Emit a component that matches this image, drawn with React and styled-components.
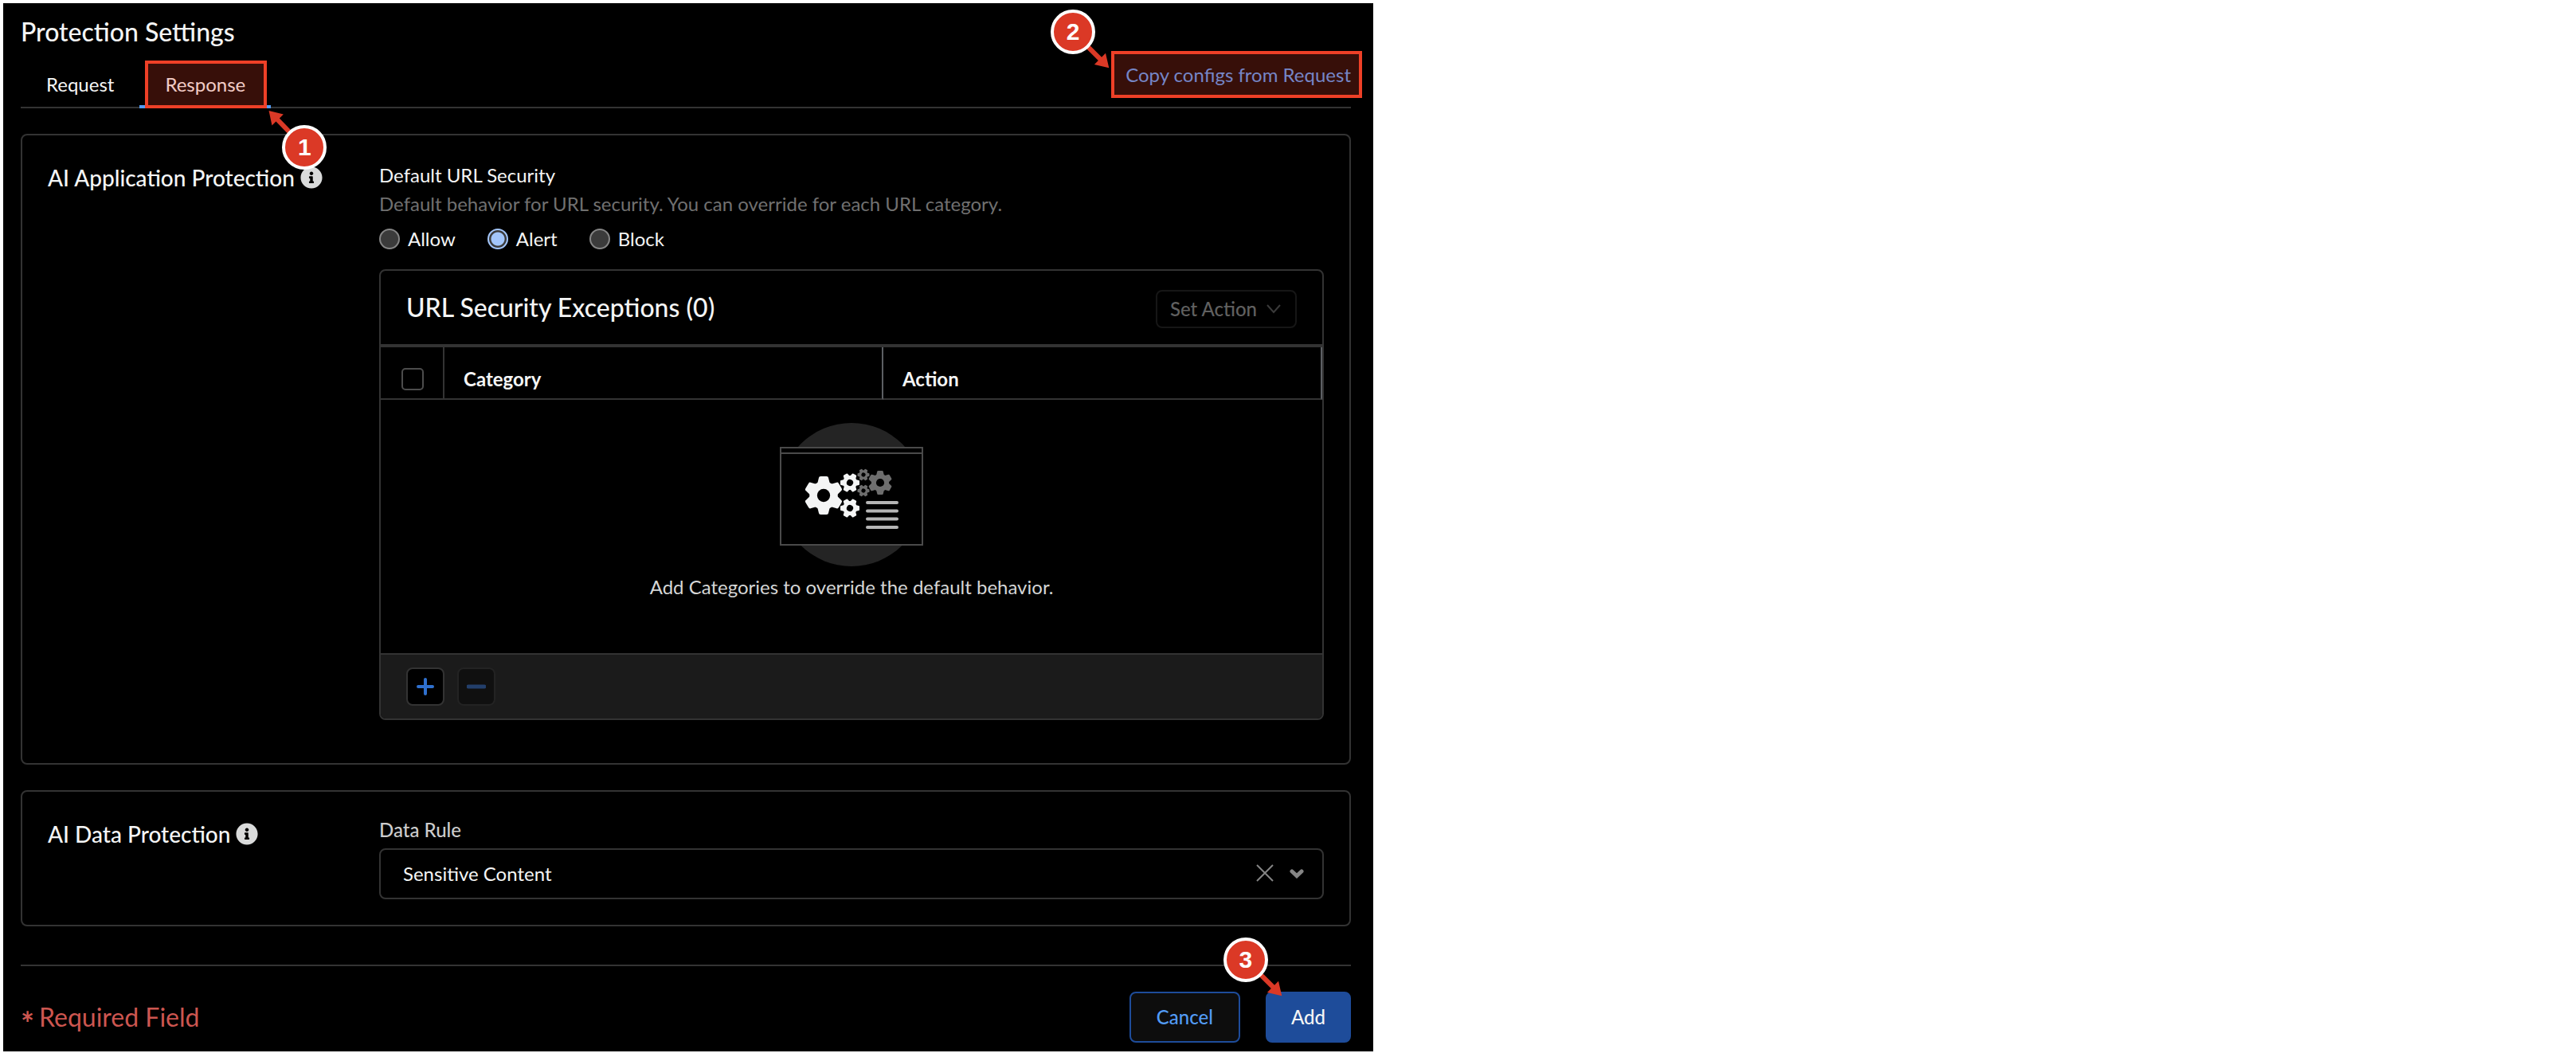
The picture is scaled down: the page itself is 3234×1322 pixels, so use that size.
import React, { useState } from "react";
import styled, { createGlobalStyle, css } from "styled-components";
import { FaInfoCircle } from "react-icons/fa";

const GlobalStyle = createGlobalStyle`
  *, *::before, *::after { box-sizing: border-box; }
  body {
    margin: 0;
    background: #fff;
    color: #f4f5f5;
    font-family: Lato, "Open Sans", sans-serif;
    font-size: 24px;
    line-height: 36px;
  }
  button, input, select { font: inherit; color: inherit; margin: 0; }
`;

const line = "#333";
const red = "#ee4027";

const Page = styled.main`
  padding: 4px;
`;

const Panel = styled.form`
  max-width: 1720px;
  background: #000;
  padding: 16px 28px 11px 22px;
`;

const Title = styled.h1`
  margin: 0 0 16px;
  font-size: 32px;
  line-height: 40px;
  font-weight: 500;
`;

const TabBar = styled.div`
  display: flex;
  align-items: flex-start;
  justify-content: space-between;
  border-bottom: 2px solid ${line};
`;

const Tabs = styled.div`
  display: flex;
  margin-bottom: -2px;
`;

const Tab = styled.button`
  position: relative;
  border: 0;
  padding: 12px 32px;
  background: none;
  cursor: pointer;
  box-shadow: ${(p) => (p.$active ? "inset 0 -4px 0 #529bf5" : "none")};
`;

const CopyLink = styled.a`
  position: relative;
  color: #529bf5;
  text-decoration: none;
`;

const Highlight = styled.span`
  position: absolute;
  inset: ${(p) => p.$inset};
  border: 4px solid ${red};
  background: rgba(238, 64, 39, 0.23);
  pointer-events: none;
`;

const Marker = styled.span`
  position: absolute;
  left: ${(p) => p.$left};
  top: ${(p) => p.$top};
  z-index: 2;
  width: 56px;
  height: 56px;
  pointer-events: none;
`;

const MarkerArrow = styled.svg`
  position: absolute;
  left: 50%;
  top: 50%;
  overflow: visible;
  transform: rotate(${(p) => p.$angle}deg);
  transform-origin: 0 0;
`;

const MarkerDisc = styled.span`
  position: absolute;
  inset: 0;
  display: flex;
  align-items: center;
  justify-content: center;
  border: 4px solid #fff;
  border-radius: 50%;
  background: #db3926;
  color: #fff;
  font: bold 30px/36px "Liberation Sans", Arial, sans-serif;
`;

const Card = styled.section`
  display: grid;
  grid-template-columns: 416px minmax(0, 1fr);
  margin-top: 32px;
  padding: 32px;
  border: 2px solid ${line};
  border-radius: 8px;
`;

const CardTitle = styled.h2`
  display: flex;
  align-items: center;
  gap: 7px;
  margin: 0;
  align-self: start;
  font-size: 28px;
  line-height: 42px;
  font-weight: 500;
  svg { color: #dadbdb; }
`;

const Field = styled.fieldset`
  margin: 0;
  padding: 0;
  border: 0;
  min-width: 0;
`;

const Legend = styled.legend`
  padding: 0;
`;

const Hint = styled.p`
  margin: 0;
  color: #707070;
`;

const Radios = styled.div`
  display: flex;
  gap: 40px;
  margin: 8px 0 20px;
`;

const RadioLabel = styled.label`
  display: flex;
  align-items: center;
  gap: 10px;
`;

const Radio = styled.input`
  appearance: none;
  width: 26px;
  height: 26px;
  border: 2px solid #858585;
  border-radius: 50%;
  background: #3b3b3b;
  &:checked {
    border-color: #a3c6fb;
    background: radial-gradient(circle, #a3c6fb 0 8px, #3b3b3b 9px);
  }
`;

const TableBox = styled.div`
  margin-bottom: 22px;
  border: 2px solid ${line};
  border-radius: 8px;
  overflow: hidden;
`;

const TableHead = styled.div`
  display: flex;
  justify-content: space-between;
  padding: 24px 32px 20px;
  border-bottom: 4px solid ${line};
`;

const TableTitle = styled.h3`
  margin: 0;
  font-size: 32px;
  line-height: 44px;
  font-weight: 500;
`;

const SetAction = styled.button`
  display: flex;
  align-items: center;
  gap: 12px;
  height: 48px;
  padding: 0 18px 0 16px;
  border: 2px solid #161616;
  border-radius: 8px;
  background: none;
  color: #606060;
  font-weight: 500;
`;

const Table = styled.table`
  width: 100%;
  table-layout: fixed;
  border-collapse: separate;
  border-spacing: 0;
`;

const Th = styled.th`
  height: 66px;
  padding: 16px 24px 0;
  border-bottom: 2px solid ${line};
  border-right: 2px solid ${(p) => (p.$narrow ? line : "#5c5f63")};
  text-align: left;
  font-weight: 700;
  ${(p) => p.$narrow && css`
    width: 80px;
    padding: 16px 24px 0 26px;
  `}
`;

const Check = styled.input`
  appearance: none;
  display: block;
  width: 28px;
  height: 28px;
  border: 2px solid #4c4c4c;
  border-radius: 5px;
  background: #000;
`;

const Empty = styled.td`
  padding: 29px 0 65px;
  text-align: center;
  color: #d5d6d6;
  svg { display: block; margin: 0 auto 8px; }
`;

const TableFoot = styled.div`
  display: flex;
  gap: 16px;
  padding: 16px 32px;
  border-top: 2px solid ${line};
  background: #1b1b1b;
`;

const SquareButton = styled.button`
  display: grid;
  place-items: center;
  width: 48px;
  height: 48px;
  padding: 0;
  border: 2px solid ${line};
  border-radius: 8px;
  background: #000;
  color: #2f70ce;
  &:disabled {
    border-color: #232323;
    background: #101010;
    color: #233f6b;
  }
`;

const FieldLabel = styled.label`
  display: block;
  margin-bottom: 7px;
  line-height: 32px;
  font-weight: 500;
  color: #ccc;
`;

const SelectBox = styled.div`
  position: relative;
  display: flex;
  align-items: center;
  height: 64px;
  border: 2px solid ${line};
  border-radius: 8px;
`;

const Select = styled.select`
  appearance: none;
  width: 100%;
  height: 100%;
  padding: 0 104px 0 28px;
  border: 0;
  background: none;
  outline: 0;
`;

const SelectIcons = styled.div`
  position: absolute;
  right: 23px;
  display: flex;
  align-items: center;
  gap: 20px;
  pointer-events: none;
`;

const ClearButton = styled.button`
  display: flex;
  padding: 0 0 2px;
  border: 0;
  background: none;
  pointer-events: auto;
`;

const Footer = styled.footer`
  display: flex;
  align-items: center;
  gap: 32px;
  margin-top: 48px;
  padding-top: 32px;
  border-top: 2px solid ${line};
`;

const Required = styled.span`
  display: flex;
  align-items: center;
  gap: 6px;
  margin-right: auto;
  color: #cd5650;
  font-size: 32px;
  line-height: 40px;
`;

const Asterisk = styled.span`
  padding-top: 16px;
  font-size: 40px;
  line-height: 40px;
  font-weight: 700;
`;

const Button = styled.button`
  position: relative;
  height: 64px;
  padding: 0 ${(p) => (p.$primary ? "30px" : "32px")};
  border: 2px solid #1e4c9a;
  border-radius: 8px;
  background: ${(p) => (p.$primary ? "#1e4c9a" : "#0d0d0d")};
  color: ${(p) => (p.$primary ? "#f4f5f5" : "#529bf5")};
  font-weight: 500;
`;

function Callout({ number, left, top, angle }) {
  return (
    <Marker $left={left} $top={top}>
      <MarkerArrow $angle={angle} width="1" height="1" fill="#db3926">
        <path d="M20 -3H48V-10L64 0L48 10V3H20Z" />
      </MarkerArrow>
      <MarkerDisc>{number}</MarkerDisc>
    </Marker>
  );
}

function Gear({ x, y, r, turn = 0, fill }) {
  const w = r * 0.25;
  const root = r * 0.33;
  const tooth = `M${-root} ${-r * 0.6}L${-w} ${-r * 0.93}Q${-w} ${-r} ${-w * 0.6} ${-r}H${w * 0.6}Q${w} ${-r} ${w} ${-r * 0.93}L${root} ${-r * 0.6}Z`;
  return (
    <g transform={`translate(${x} ${y}) rotate(${turn})`} fill={fill}>
      {[0, 60, 120, 180, 240, 300].map((a) => (
        <path key={a} d={tooth} transform={`rotate(${a})`} />
      ))}
      <circle r={r * 0.74} />
      <circle r={r * 0.34} fill="#000" />
    </g>
  );
}

function EmptyArt() {
  return (
    <svg width="180" height="180" viewBox="0 0 180 180" aria-hidden="true">
      <circle cx="90" cy="90" r="90" fill="#242424" />
      <rect x="1" y="31" width="178" height="122" fill="#000" stroke="#4a4a4a" strokeWidth="2" />
      <path d="M1 38H179" stroke="#4a4a4a" strokeWidth="2" />
      <Gear x={55} y={91} r={24} fill="#f4f5f5" />
      <Gear x={88} y={75} r={12} turn={30} fill="#f4f5f5" />
      <Gear x={88} y={107} r={12} turn={30} fill="#f4f5f5" />
      <Gear x={105} y={65} r={7.5} turn={30} fill="#6e6e6e" />
      <Gear x={105} y={85} r={7.5} turn={30} fill="#6e6e6e" />
      <Gear x={126} y={75} r={15} fill="#6e6e6e" />
      <path
        d="M110 100H147M110 110.5H147M110 120.5H147M110 131H147"
        stroke="#b5b5b5"
        strokeWidth="4"
        strokeLinecap="round"
      />
    </svg>
  );
}

export default function App() {
  const [action, setAction] = useState("Alert");
  return (
    <>
      <GlobalStyle />
      <Page>
        <Panel onSubmit={(e) => e.preventDefault()}>
          <Title>Protection Settings</Title>
          <TabBar>
            <Tabs role="tablist">
              <Tab type="button" role="tab" aria-selected="false">Request</Tab>
              <Tab type="button" role="tab" aria-selected="true" $active>
                Response
                <Highlight $inset="0 5px 0 7px" />
                <Callout number={1} left="179px" top="81px" angle={-134} />
              </Tab>
            </Tabs>
            <CopyLink href="#copy">
              Copy configs from Request
              <Highlight $inset="-12px -14px -11px -18px" />
              <Callout number={2} left="-94px" top="-64px" angle={45} />
            </CopyLink>
          </TabBar>

          <Card>
            <CardTitle>
              AI Application Protection
              <FaInfoCircle size={28} aria-hidden="true" />
            </CardTitle>
            <Field>
              <Legend>Default URL Security</Legend>
              <Hint>Default behavior for URL security. You can override for each URL category.</Hint>
              <Radios>
                {["Allow", "Alert", "Block"].map((name) => (
                  <RadioLabel key={name}>
                    <Radio
                      type="radio"
                      name="url-security"
                      checked={action === name}
                      onChange={() => setAction(name)}
                    />
                    {name}
                  </RadioLabel>
                ))}
              </Radios>
              <TableBox>
                <TableHead>
                  <TableTitle>URL Security Exceptions (0)</TableTitle>
                  <SetAction type="button" disabled>
                    Set Action
                    <svg width="18" height="12" viewBox="0 0 18 12" aria-hidden="true">
                      <path d="M1 1L9 10L17 1" fill="none" stroke="#3a3a3a" strokeWidth="2" />
                    </svg>
                  </SetAction>
                </TableHead>
                <Table>
                  <thead>
                    <tr>
                      <Th $narrow><Check type="checkbox" aria-label="Select all" /></Th>
                      <Th>Category</Th>
                      <Th>Action</Th>
                    </tr>
                  </thead>
                  <tbody>
                    <tr>
                      <Empty colSpan={3}>
                        <EmptyArt />
                        Add Categories to override the default behavior.
                      </Empty>
                    </tr>
                  </tbody>
                </Table>
                <TableFoot>
                  <SquareButton type="button" aria-label="Add category">
                    <svg width="22" height="22" viewBox="0 0 22 22" aria-hidden="true">
                      <path d="M2 11H20M11 2V20" stroke="currentColor" strokeWidth="4" strokeLinecap="round" />
                    </svg>
                  </SquareButton>
                  <SquareButton type="button" aria-label="Remove category" disabled>
                    <svg width="24" height="22" viewBox="0 0 24 22" aria-hidden="true">
                      <path d="M2 11H22" stroke="currentColor" strokeWidth="5" strokeLinecap="round" />
                    </svg>
                  </SquareButton>
                </TableFoot>
              </TableBox>
            </Field>
          </Card>

          <Card>
            <CardTitle>
              AI Data Protection
              <FaInfoCircle size={28} aria-hidden="true" />
            </CardTitle>
            <div>
              <FieldLabel htmlFor="data-rule">Data Rule</FieldLabel>
              <SelectBox>
                <Select id="data-rule" defaultValue="Sensitive Content">
                  <option>Sensitive Content</option>
                </Select>
                <SelectIcons>
                  <ClearButton type="button" aria-label="Clear">
                    <svg width="22" height="22" viewBox="0 0 22 22" aria-hidden="true">
                      <path d="M1 1L21 21M21 1L1 21" stroke="#858585" strokeWidth="2" />
                    </svg>
                  </ClearButton>
                  <svg width="18" height="12" viewBox="0 0 18 12" aria-hidden="true">
                    <path d="M3 3L9 8.500L15 3" fill="none" stroke="#858585" strokeWidth="5" strokeLinecap="round" />
                  </svg>
                </SelectIcons>
              </SelectBox>
            </div>
          </Card>

          <Footer>
            <Required>
              <Asterisk>*</Asterisk>
              Required Field
            </Required>
            <Button type="button">Cancel</Button>
            <Button type="submit" $primary>
              Add
              <Callout number={3} left="-55px" top="-70px" angle={45} />
            </Button>
          </Footer>
        </Panel>
      </Page>
    </>
  );
}
